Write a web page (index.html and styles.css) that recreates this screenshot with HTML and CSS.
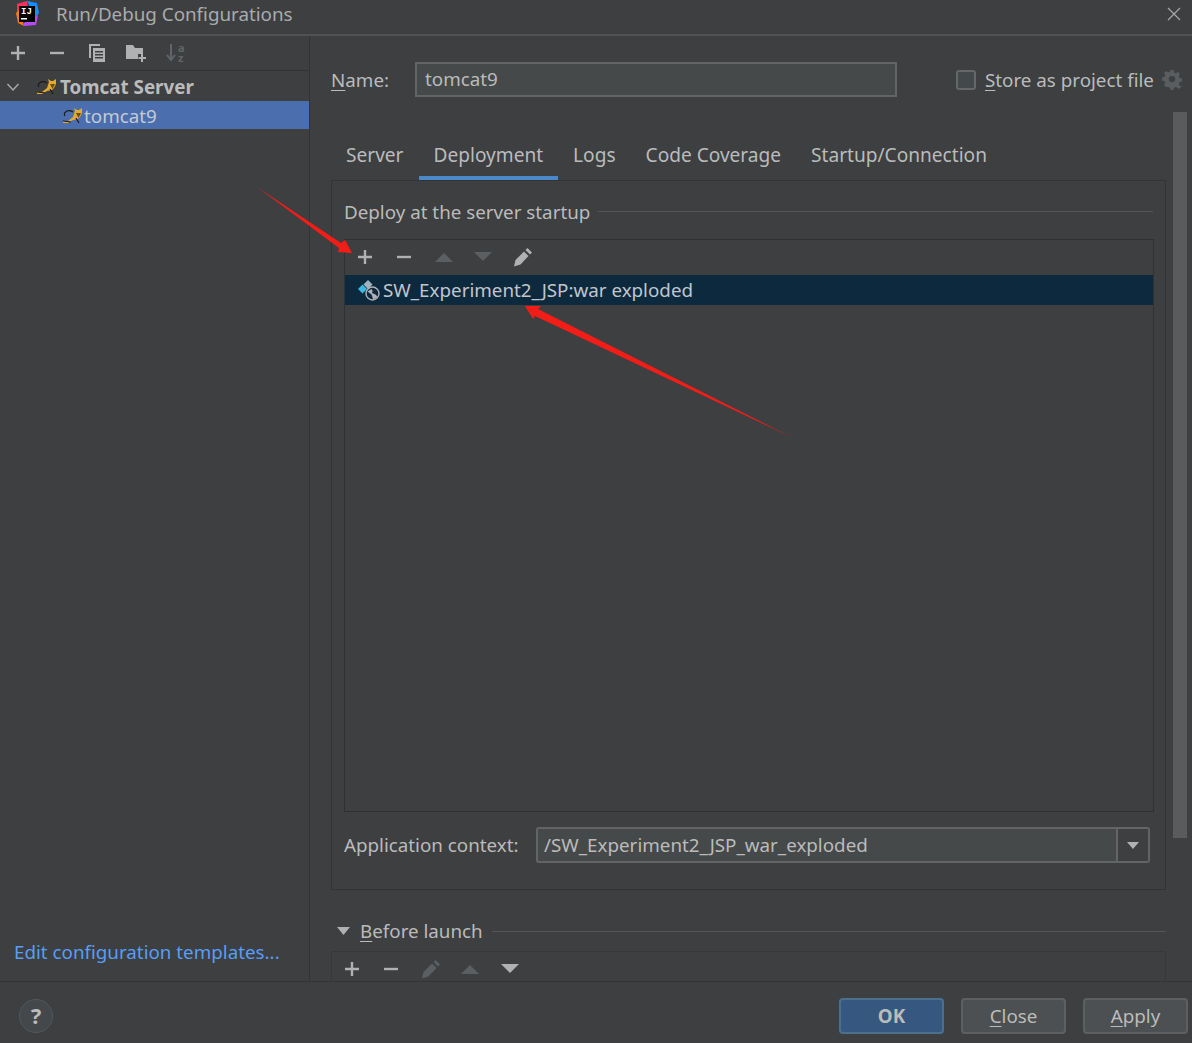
FILE: index.html
```html
<!DOCTYPE html>
<html lang="en">
<head>
  <meta charset="UTF-8">
  <title>Run/Debug Configurations</title>
  <link rel="stylesheet" href="styles.css">
</head>
<body>
  <div class="dialog">
    <div class="titlebar">
      <svg class="logo" width="26" height="26" viewBox="0 0 26 26">
        <polygon points="3,3 13,0 14,8 3,14" fill="#fe315d"/>
        <polygon points="13,0 23,2 25,12 20,18 16,6" fill="#1a8cff"/>
        <polygon points="2,12 6,8 10,25 4,22" fill="#f97a12"/>
        <polygon points="10,22 24,14 22,24 10,25" fill="#b74af7"/>
        <rect x="5" y="5" width="16" height="16" fill="#000"/>
        <text x="7" y="13" class="logo-text">IJ</text>
        <rect x="7" y="17" width="6" height="1.5" fill="#fff"/>
      </svg>
      <span class="title">Run/Debug Configurations</span>
      <svg class="close" width="14" height="14" viewBox="0 0 14 14"><path d="M1 1l12 12M13 1L1 13" stroke="#a8a8a8" stroke-width="1.2" fill="none"/></svg>
    </div>

    <div class="main">
      <div class="sidebar">
        <div class="icon-row side-tools">
          <svg width="18" height="18" viewBox="0 0 18 18"><path d="M9 2v14M2 9h14" stroke="#afb1b3" stroke-width="2.4"/></svg>
          <svg width="18" height="18" viewBox="0 0 18 18"><path d="M2 9h14" stroke="#afb1b3" stroke-width="2.4"/></svg>
          <svg width="20" height="20" viewBox="0 0 20 20"><path d="M2 1h11v2H4v12H2z" fill="#afb1b3"/><path d="M6 5h12v14H6z M8 8v1.6h8V8z M8 11v1.6h8V11z M8 14v1.6h8V14z" fill="#afb1b3" fill-rule="evenodd"/></svg>
          <svg width="22" height="20" viewBox="0 0 22 20"><path d="M1 2h7l2 3h8v6h-5v5H1z" fill="#afb1b3"/><path d="M17 11v8M13.500 15h7.500" stroke="#afb1b3" stroke-width="2"/></svg>
          <svg width="22" height="30" viewBox="0 -5 22 30"><path d="M6 1v15M2 12l4 5 4-5" stroke="#626567" stroke-width="2" fill="none"/><text class="sort-text"><tspan x="13" y="8.500">a</tspan><tspan x="13" y="18.500">z</tspan></text></svg>
        </div>
        <div class="tree">
          <div class="tree-row tree-group">
            <svg class="chevron" width="14" height="10" viewBox="0 0 14 10"><path d="M1.500 2l5.500 6 5.500-6" stroke="#a8a8a8" stroke-width="1.500" fill="none"/></svg>
            <svg class="cat" width="22" height="16" viewBox="0 0 22 16"><path d="M1 13l5 0 5-4 2-6-1-3 3 2h2l3-2 0 5-2 4-2 2-5 1-5 3-5 0z" fill="#e2ab30"/><path d="M3 8q-2-3 2-5 3-1 6 1M1 13l8 1M14 10l3 5" stroke="#1c1a14" stroke-width="1.200" fill="none"/><path d="M14 5h5l-2.500 5z" fill="#6b4d14"/></svg>
            <span>Tomcat Server</span>
          </div>
          <div class="tree-row tree-item">
            <svg class="cat" width="22" height="16" viewBox="0 0 22 16"><path d="M1 13l5 0 5-4 2-6-1-3 3 2h2l3-2 0 5-2 4-2 2-5 1-5 3-5 0z" fill="#e2ab30"/><path d="M3 8q-2-3 2-5 3-1 6 1M1 13l8 1M14 10l3 5" stroke="#1c1a14" stroke-width="1.200" fill="none"/><path d="M14 5h5l-2.500 5z" fill="#6b4d14"/></svg>
            <span>tomcat9</span>
          </div>
        </div>
        <a class="templates">Edit configuration templates...</a>
      </div>

      <div class="content">
        <div class="name-row">
          <label class="name-label"><u>N</u>ame:</label>
          <div class="field name-field">tomcat9</div>
          <div class="store">
            <span class="checkbox"></span>
            <span><u>S</u>tore as project file</span>
            <svg width="20" height="22" viewBox="0 0 20 22"><path d="M8.500 1h3l.5 2.500 1.800.8 2.200-1.300 2 2.100-1.300 2.100.8 1.800 2.500.6v3l-2.500.6-.8 1.800 1.300 2.100-2 2.100-2.200-1.300-1.800.8-.5 2.400h-3l-.5-2.400-1.800-.8L4 18.200 2 16.100l1.300-2.100-.8-1.800L0 11.600v-3l2.500-.6.800-1.800L2 4.100 4 2l2.200 1.300L8 2.500z" fill="#5a5d5f"/><circle cx="10" cy="10.100" r="3.200" fill="#3d3f41"/><path d="M14 17h6l-3 3z" fill="#5a5d5f"/></svg>
          </div>
        </div>

        <div class="tabs">
          <span class="tab">Server</span>
          <span class="tab tab-active">Deployment</span>
          <span class="tab">Logs</span>
          <span class="tab">Code Coverage</span>
          <span class="tab">Startup/Connection</span>
        </div>

        <div class="tab-panel">
          <div class="group-title"><span>Deploy at the server startup</span><i class="rule"></i></div>
          <div class="list-box">
            <div class="icon-row list-tools">
              <svg width="18" height="18" viewBox="0 0 18 18"><path d="M9 2v14M2 9h14" stroke="#afb1b3" stroke-width="2.400"/></svg>
              <svg width="18" height="18" viewBox="0 0 18 18"><path d="M2 9h14" stroke="#afb1b3" stroke-width="2.400"/></svg>
              <svg width="18" height="18" viewBox="0 0 18 18"><path d="M9 5l9 9H0z" fill="#5c5f61"/></svg>
              <svg width="18" height="18" viewBox="0 0 18 18"><path d="M0 4h18l-9 9z" fill="#5c5f61"/></svg>
              <svg width="20" height="20" viewBox="0 0 20 20"><path d="M14.500 1l4.500 4.500-2 2L12.500 3zM11 4.500l4.500 4.500-8 8.500L1 19.500l1.500-6.500z" fill="#afb1b3"/></svg>
            </div>
            <div class="artifact">
              <svg width="23" height="22" viewBox="0 0 23 22"><path d="M11 1l4.500 4.500L11 10 6.500 5.500z" fill="#9fb3c2"/><path d="M5.500 5.500L10 10l-4.500 4.500L1 10z" fill="#40b6e0"/><circle cx="15.500" cy="14.500" r="6.500" fill="#0d293e" stroke="#afb1b3" stroke-width="1.400"/><path d="M10.500 12.500l4-2.500q2 2 .5 4l3.500 1.500 2 2q-2 3-4.500 2.500l-1.500-4.500z" fill="#afb1b3"/></svg>
              <span>SW_Experiment2_JSP:war exploded</span>
            </div>
          </div>
          <div class="context-row">
            <label>Application context:</label>
            <div class="combo">
              <div class="combo-value">/SW_Experiment2_JSP_war_exploded</div>
              <div class="combo-arrow"><svg width="12" height="7" viewBox="0 0 12 7"><path d="M0 0h12L6 7z" fill="#afb1b3"/></svg></div>
            </div>
          </div>
        </div>

        <div class="before-title">
          <svg width="13" height="8" viewBox="0 0 13 8"><path d="M0 0h13L6.500 8z" fill="#afb1b3"/></svg>
          <span><u>B</u>efore launch</span>
          <i class="rule"></i>
        </div>
        <div class="icon-row before-box">
          <svg width="18" height="18" viewBox="0 0 18 18"><path d="M9 2v14M2 9h14" stroke="#afb1b3" stroke-width="2.400"/></svg>
          <svg width="18" height="18" viewBox="0 0 18 18"><path d="M2 9h14" stroke="#afb1b3" stroke-width="2.400"/></svg>
          <svg width="20" height="20" viewBox="0 0 20 20"><path d="M14.500 1l4.500 4.500-2 2L12.500 3zM11 4.500l4.500 4.500-8 8.500L1 19.500l1.500-6.500z" fill="#5c5f61"/></svg>
          <svg width="18" height="18" viewBox="0 0 18 18"><path d="M9 5l9 9H0z" fill="#5c5f61"/></svg>
          <svg width="18" height="18" viewBox="0 0 18 18"><path d="M0 4h18l-9 9z" fill="#afb1b3"/></svg>
        </div>
        <div class="scrollbar"></div>
      </div>
    </div>

    <div class="footer">
      <div class="help">?</div>
      <div class="buttons">
        <button class="btn btn-ok">OK</button>
        <button class="btn"><u>C</u>lose</button>
        <button class="btn"><u>A</u>pply</button>
      </div>
    </div>

    <svg class="arrows" width="1192" height="1043" viewBox="0 0 1192 1043">
      <path d="M257 187L341 243L345 240L352 253L338 252L339 248z" fill="#f31d18"/>
      <path d="M793 438L538 309L541 306L525 306L533 319L535 316z" fill="#f31d18"/>
    </svg>
  </div>
</body>
</html>
```

FILE: styles.css
```css
* { box-sizing: border-box; }
html, body { margin: 0; padding: 0; }
body { background: #3d3f41; color: #bbbbbb; font-family: "Noto Sans", "Open Sans", sans-serif; font-size: 18.8px; }
u { text-underline-offset: 3px; }

.dialog { position: relative; width: 1192px; height: 1043px; display: flex; flex-direction: column; overflow: hidden; }

.titlebar { height: 36px; flex: none; display: flex; align-items: center; padding: 0 11px 6px 14px; border-bottom: 2px solid #4f5152; }
.logo { flex: none; margin-right: 16px; }
.logo-text { font-size: 9px; font-weight: 700; fill: #fff; font-family: "Liberation Mono", monospace; }
.title { flex: 1; color: #a9abad; }

.main { flex: 1; min-height: 0; display: flex; }

.icon-row { display: grid; grid-auto-flow: column; grid-auto-columns: 39.5px; justify-content: start; justify-items: center; align-items: center; }

.sidebar { width: 310px; flex: none; display: flex; flex-direction: column; border-right: 1px solid #323436; }
.side-tools { height: 35px; flex: none; margin-left: -2px; border-bottom: 1px solid #323436; }
.sort-text { font-size: 11px; fill: #626567; font-weight: 700; }

.tree { flex: 1; padding-top: 1px; }
.tree-row { display: flex; align-items: center; height: 29px; white-space: nowrap; }
.tree-group { padding-left: 6px; font-weight: 700; color: #bbbbbb; }
.tree-group .chevron { margin-right: 16px; }
.tree-group .cat { margin-right: 2px; }
.tree-item { width: 309px; height: 28px; background: #4b6eaf; padding: 1px 0 0 62px; color: #c4cad4; }
.tree-item .cat { margin-right: 0; }

.templates { color: #589df6; padding: 0 0 15px 14px; line-height: 27px; white-space: nowrap; }

.content { position: relative; flex: 1; min-width: 0; padding-left: 21px; overflow: hidden; white-space: nowrap; }

.name-row { display: flex; align-items: center; height: 35px; margin-top: 26px; }
.name-label { width: 84px; flex: none; }
.field { height: 35px; line-height: 31px; background: #45494a; border: 2px solid #646464; padding-left: 8px; color: #bbbbbb; }
.name-field { width: 482px; flex: none; }
.store { display: flex; align-items: center; margin-left: 59px; }
.checkbox { width: 20px; height: 20px; background: #43494a; border: 2px solid #656769; border-radius: 3px; margin-right: 9px; }
.store svg { margin-left: 8px; }

.tabs { display: flex; height: 45px; margin-top: 38px; font-size: 19.1px; }
.tab { padding: 0 15px; line-height: 41px; border-bottom: 4px solid transparent; }
.tab-active { border-bottom-color: #4a88c7; }

.tab-panel { width: 835px; height: 710px; border: 1px solid #323436; padding: 0 12px; }
.group-title { display: flex; align-items: center; gap: 8px; height: 27px; margin-top: 17px; }
.rule { flex: 1; height: 1px; background: #535556; }
.list-box { margin-top: 14px; width: 810px; height: 573px; border: 1px solid #2f3133; }
.list-tools { height: 35px; padding-bottom: 1px; }
.artifact { height: 30px; background: #0d293e; display: flex; align-items: center; padding-left: 12px; gap: 3px; color: #c0c6cc; }

.context-row { display: flex; align-items: center; height: 36px; margin-top: 15px; }
.context-row label { width: 192px; flex: none; }
.combo { flex: none; width: 614px; height: 36px; display: flex; background: #45494a; border: 2px solid #646464; border-radius: 3px; }
.combo-value { flex: 1; padding-left: 6px; line-height: 32px; }
.combo-arrow { width: 32px; display: flex; align-items: center; justify-content: center; background: #3d3f41; border-left: 2px solid #646464; }

.before-title { display: flex; align-items: center; width: 835px; height: 28px; margin-top: 27px; padding-left: 6px; }
.before-title svg { margin-right: 10px; }
.before-title .rule { margin-left: 9px; }
.before-box { width: 835px; height: 35px; margin-top: 6px; border: 1px solid #36383a; border-bottom: 0; }

.scrollbar { position: absolute; left: 863px; top: 76px; width: 14px; height: 726px; background: #595b5d; }

.footer { height: 62px; flex: none; display: flex; align-items: center; justify-content: space-between; padding: 7px 4px 0 19px; border-top: 1px solid #323436; }
.help { width: 34px; height: 34px; border-radius: 50%; background: #45484a; border: 1px solid #54585a; color: #bbbbbb; text-align: center; line-height: 30px; font-weight: 700; font-size: 22px; }
.buttons { display: flex; gap: 17px; }
.btn { width: 105px; height: 36px; padding: 0; background: #4c5052; border: 2px solid #5e6060; border-radius: 4px; color: #bbbbbb; font: 18.8px "Noto Sans", "Open Sans", sans-serif; }
.btn-ok { background: #365880; border-color: #4c708c; font-weight: 700; }

.arrows { position: absolute; left: 0; top: 0; pointer-events: none; }
```
